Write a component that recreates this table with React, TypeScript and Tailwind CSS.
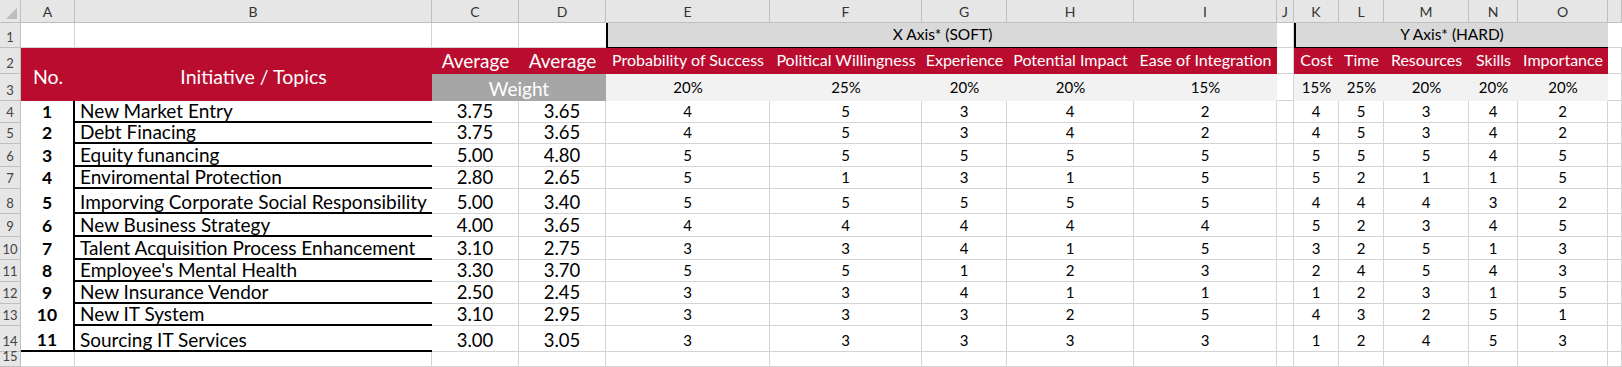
import React from "react";

const body: [number, string, string, string, number[], number[]][] = [
  [1, "New Market Entry", "3.75", "3.65", [4, 5, 3, 4, 2], [4, 5, 3, 4, 2]],
  [2, "Debt Finacing", "3.75", "3.65", [4, 5, 3, 4, 2], [4, 5, 3, 4, 2]],
  [3, "Equity funancing", "5.00", "4.80", [5, 5, 5, 5, 5], [5, 5, 5, 4, 5]],
  [4, "Enviromental Protection", "2.80", "2.65", [5, 1, 3, 1, 5], [5, 2, 1, 1, 5]],
  [5, "Imporving Corporate Social Responsibility", "5.00", "3.40", [5, 5, 5, 5, 5], [4, 4, 4, 3, 2]],
  [6, "New Business Strategy", "4.00", "3.65", [4, 4, 4, 4, 4], [5, 2, 3, 4, 5]],
  [7, "Talent Acquisition Process Enhancement", "3.10", "2.75", [3, 3, 4, 1, 5], [3, 2, 5, 1, 3]],
  [8, "Employee's Mental Health", "3.30", "3.70", [5, 5, 1, 2, 3], [2, 4, 5, 4, 3]],
  [9, "New Insurance Vendor", "2.50", "2.45", [3, 3, 4, 1, 1], [1, 2, 3, 1, 5]],
  [10, "New IT System", "3.10", "2.95", [3, 3, 3, 2, 5], [4, 3, 2, 5, 1]],
  [11, "Sourcing IT Services", "3.00", "3.05", [3, 3, 3, 3, 3], [1, 2, 4, 5, 3]],
];

const letters = ["A", "B", "C", "D", "E", "F", "G", "H", "I", "J", "K", "L", "M", "N", "O", ""];
const xHeads = ["Probability of Success", "Political Willingness", "Experience", "Potential Impact", "Ease of Integration"];
const xPct = ["20%", "25%", "20%", "20%", "15%"];
const yHeads = ["Cost", "Time", "Resources", "Skills", "Importance"];
const yPct = ["15%", "25%", "20%", "20%", "20%"];

const grid = "border-r border-b border-[#D4D4D4]";
const rowHead =
  "bg-[#E6E6E6] border-r border-b border-[#BFBFBF] flex items-end justify-center pb-[3px] text-[13px] leading-[13px] text-[#444]";

export default function App() {
  return (
    <div className="w-[1622px] h-[367px] overflow-hidden bg-white font-['Lato',sans-serif] text-black">
      <div className="grid grid-cols-[21px_54px_357px_87px_87px_164px_152px_85px_127px_143px_17px_45px_45px_85px_49px_90px_14px] grid-rows-[23px_25px_26px_27px_22px_21px_23px_22px_25px_23px_23px_22px_22px_22px_26px_15px]">
        {/* column letters */}
        <div className="bg-[#E6E6E6] border-r border-b border-[#BFBFBF] flex items-end justify-end p-[3px]">
          <svg width="11" height="11" viewBox="0 0 11 11">
            <path d="M11 0 L11 11 L0 11 Z" fill="#BDBDBD" />
          </svg>
        </div>
        {letters.map((l, i) => (
          <div
            key={i}
            className="bg-[#E6E6E6] border-r border-b border-[#BFBFBF] flex items-center justify-center text-[14px] text-[#333]"
          >
            {l}
          </div>
        ))}

        {/* row 1 */}
        <div className={rowHead}>1</div>
        <div className={grid} />
        <div className={grid} />
        <div className={grid} />
        <div className="border-b border-[#D4D4D4]" />
        <div className="col-span-5 bg-[#D9D9D9] border-l-2 border-b border-black flex items-end justify-center pb-[5px] text-[15.5px] leading-[15px]">
          X Axis* (SOFT)
        </div>
        <div className={grid} />
        <div className="col-span-5 bg-[#D9D9D9] border-l-2 border-b border-black flex items-end justify-center pb-[5px] text-[15.5px] leading-[15px]">
          Y Axis* (HARD)
        </div>
        <div className="border-b border-[#D4D4D4]" />

        {/* row 2 */}
        <div className={rowHead}>2</div>
        <div className="row-span-2 bg-[#BA0C2F] flex items-center justify-center pt-[4px] text-[19.5px] text-white">
          No.
        </div>
        <div className="row-span-2 bg-[#BA0C2F] flex items-center justify-center pt-[4px] text-[19.5px] text-white">
          Initiative / Topics
        </div>
        <div className="bg-[#BA0C2F] flex items-end justify-center pb-[4px] text-[19px] leading-[19px] text-white">
          Average
        </div>
        <div className="bg-[#BA0C2F] flex items-end justify-center pb-[4px] text-[19px] leading-[19px] text-white">
          Average
        </div>
        {xHeads.map((h) => (
          <div
            key={h}
            className="bg-[#BA0C2F] flex items-end justify-center pb-[6px] text-[16px] leading-[16px] text-white whitespace-nowrap"
          >
            {h}
          </div>
        ))}
        <div className="border-r border-b border-[#D4D4D4] bg-white" />
        {yHeads.map((h) => (
          <div
            key={h}
            className="bg-[#BA0C2F] flex items-end justify-center pb-[6px] text-[16px] leading-[16px] text-white whitespace-nowrap"
          >
            {h}
          </div>
        ))}
        <div className={grid} />

        {/* row 3 */}
        <div className={rowHead}>3</div>
        <div className="col-span-2 bg-[#A6A6A6] flex items-end justify-center pb-[3px] text-[19px] leading-[19px] text-white">
          Weight
        </div>
        {xPct.map((p, i) => (
          <div
            key={i}
            className="bg-[#F2F2F2] flex items-end justify-center pb-[6px] text-[15px] leading-[15px]"
          >
            {p}
          </div>
        ))}
        <div className={grid} />
        {yPct.map((p, i) => (
          <div
            key={i}
            className="bg-[#F2F2F2] flex items-end justify-center pb-[6px] text-[15px] leading-[15px]"
          >
            {p}
          </div>
        ))}
        <div className={grid} />

        {/* body */}
        {body.map(([n, topic, avg, w, xs, ys], r) => (
          <React.Fragment key={n}>
            <div className={rowHead}>{r + 4}</div>
            <div
              className={
                r === body.length - 1
                  ? "border-r-2 border-b-2 border-black flex items-end justify-center pb-[2px] font-bold text-[17.5px] leading-[17px]"
                  : "border-r-2 border-black flex items-end justify-center pb-[3px] font-bold text-[17.5px] leading-[17px]"
              }
            >
              {n}
            </div>
            <div className="border-b-2 border-black flex items-end pl-[5px] pb-[1px] text-[19px] leading-[18px] whitespace-nowrap">
              {topic}
            </div>
            <div className={`${grid} flex items-end justify-center pb-[2px] text-[18.5px] leading-[18px]`}>{avg}</div>
            <div className={`${grid} flex items-end justify-center pb-[2px] text-[18.5px] leading-[18px]`}>{w}</div>
            {xs.map((v, i) => (
              <div key={i} className={`${grid} flex items-end justify-center pb-[3px] text-[15px] leading-[15px]`}>
                {v}
              </div>
            ))}
            <div className={grid} />
            {ys.map((v, i) => (
              <div key={i} className={`${grid} flex items-end justify-center pb-[3px] text-[15px] leading-[15px]`}>
                {v}
              </div>
            ))}
            <div className={grid} />
          </React.Fragment>
        ))}

        {/* row 15 */}
        <div className={rowHead}>15</div>
        {letters.map((_, i) => (
          <div key={i} className={grid} />
        ))}
      </div>
    </div>
  );
}
